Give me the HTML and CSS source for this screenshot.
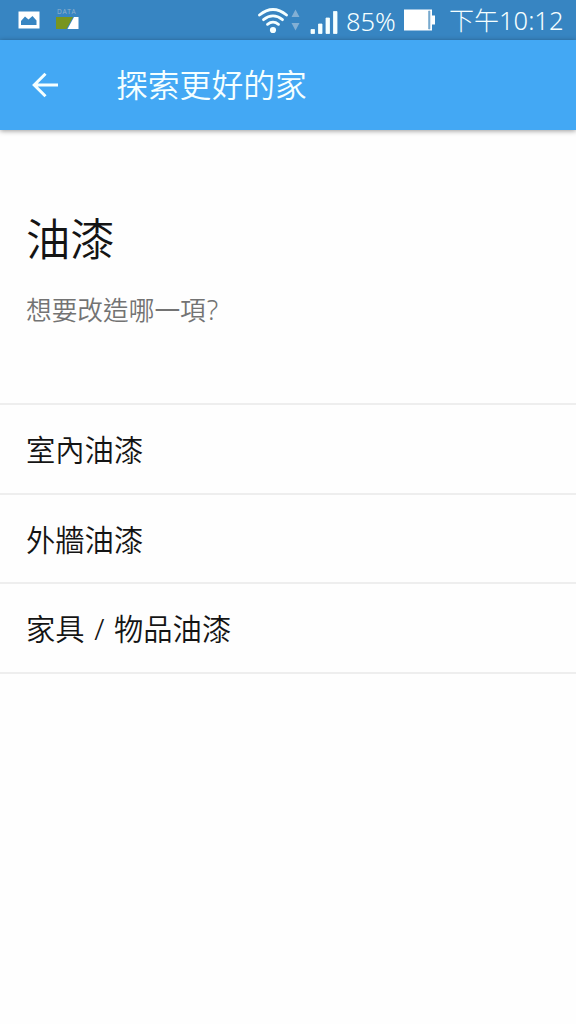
FILE: index.html
```html
<!DOCTYPE html>
<html lang="zh-Hant">
<head>
<meta charset="utf-8">
<title>探索更好的家</title>
<link rel="stylesheet" href="styles.css">
</head>
<body>
<div class="status">
  <svg class="picture" width="22" height="18" viewBox="0 0 22 18"><rect x=".5" y=".5" width="21" height="17" fill="#fff"/><path d="M3 14V10L7 5.500L10.500 8.500L14.500 5L18.500 9.500V14Z" fill="#3785c2"/></svg>
  <div class="data">
    <span class="data-label">DATA</span>
    <svg class="data-mark" width="24" height="12" viewBox="0 0 24 12"><path d="M1 0H18L11.500 12H1Z" fill="#78951f"/><path d="M19 0H23.500V12H12.500Z" fill="#fff"/></svg>
  </div>
  <svg class="wifi" width="44" height="30" viewBox="0 0 44 30"><g fill="none" stroke="#f5ffff" stroke-width="2.800" stroke-linecap="round"><path d="M2.500 10Q16 -1 29.500 10"/><path d="M6.500 14.700Q16 7 25.500 14.700"/><path d="M10.500 19.300Q16 15 21.500 19.300"/></g><circle cx="16" cy="25" r="3.100" fill="#f5ffff"/><path d="M34.500 12L38.500 4.500L42.500 12ZM34.500 18L38.500 25.500L42.500 18Z" fill="#82afd4"/></svg>
  <svg class="signal" width="28" height="24" viewBox="0 0 28 24"><path d="M1 19.500H4.500V23.500H1ZM8.500 14H12V23.500H8.500ZM16 8H19.500V23.500H16ZM23.500 1.500H27V23.500H23.500Z" fill="#f5ffff" stroke="#f5ffff" stroke-width=".8" stroke-linejoin="round"/></svg>
  <span class="percent">85%</span>
  <svg class="battery" width="32" height="22" viewBox="0 0 32 22"><path d="M0 .5H28V6.500H31V15.500H28V21.500H0Z" fill="#fff"/><path d="M24.500 2V20H26V2Z" fill="#78aacf" stroke="#78aacf" stroke-width=".6"/></svg>
  <span class="time">下午<span class="clock">10:12</span></span>
</div>
<header class="bar">
  <svg class="back" width="28" height="28" viewBox="0 0 28 28"><path d="M27 14H3.500M14.500 2.700L3.200 14L14.500 25.300" fill="none" stroke="#f5ffff" stroke-width="3"/></svg>
  <h1 class="bar-title">探索更好的家</h1>
</header>
<main>
  <section class="intro">
    <h2 class="heading">油漆</h2>
    <p class="question">想要改造哪一項<span class="mark">?</span></p>
  </section>
  <ul class="list">
    <li class="item">室內油漆</li>
    <li class="item">外牆油漆</li>
    <li class="item">家具 / 物品油漆</li>
  </ul>
</main>
</body>
</html>
```
FILE: styles.css
```css
* { box-sizing: border-box; }
body {
  margin: 0;
  min-height: 1024px;
  background: #fefefe;
  color: #141414;
  font-family: "Noto Sans", "Noto Sans CJK TC", sans-serif;
  white-space: nowrap;
}
h1, h2, p, ul { margin: 0; padding: 0; font-weight: 350; }
svg { display: block; flex: none; }
.status {
  display: flex;
  height: 40px;
  padding-left: 18px;
  background: #3785c2;
  color: #f5ffff;
  line-height: 40px;
}
.picture { margin-top: 11px; }
.data { width: 24px; margin-left: 15px; padding-top: 7px; }
.data-label {
  display: block;
  height: 10px;
  padding-left: 2px;
  color: #8fb0cc;
  font: 6.5px/9px "Noto Sans", sans-serif;
  letter-spacing: 1px;
}
.wifi { margin: 5px 0 0 178px; }
.signal { margin: 10px 0 0 9px; }
.percent { width: 52px; margin: 1px 0 0 8px; font-size: 25.5px; font-weight: 350; }
.battery { margin: 9px 0 0 6px; }
.time { margin-left: 13px; font-size: 25px; font-weight: 300; }
.clock { font-size: 25.5px; font-weight: 350; }
.bar {
  display: flex;
  align-items: center;
  height: 90px;
  padding-left: 31px;
  background: #43a8f4;
  box-shadow: 0 1px 5px rgba(0, 0, 0, .4);
  color: #f5ffff;
}
.bar-title { margin-left: 57px; font-size: 31.8px; line-height: 40px; }
.intro { height: 273px; padding: 76px 26px 0; }
.heading { font-size: 44.3px; line-height: 66px; }
.question { margin-top: 19px; color: #737373; font-size: 25.7px; line-height: 40px; }
.mark { margin-left: 1px; font-size: 27px; line-height: 1; }
.list { list-style: none; border-top: 2px solid #eee; }
.item {
  height: 89.7px;
  padding-left: 26px;
  border-bottom: 2px solid #eee;
  font-size: 29.3px;
  font-weight: 350;
  line-height: 91px;
  word-spacing: 2px;
}
```
